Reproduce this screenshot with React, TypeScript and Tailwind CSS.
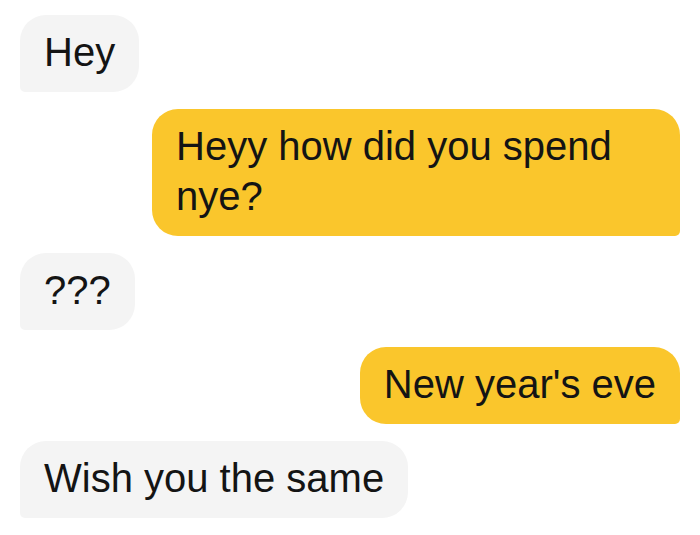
import React from "react";

type Mensaje = {
  id: number;
  texto: string;
  mio: boolean;
};

const mensajes: Mensaje[] = [
  { id: 1, texto: "Hey", mio: false },
  { id: 2, texto: "Heyy how did you spend nye?", mio: true },
  { id: 3, texto: "???", mio: false },
  { id: 4, texto: "New year's eve", mio: true },
  { id: 5, texto: "Wish you the same", mio: false },
];

const App: React.FC = () => {
  return (
    <div
      className="w-[700px] h-[535px] bg-white overflow-hidden"
      style={{ fontFamily: '"Liberation Sans", Arial, sans-serif' }}
    >
      <div className="flex flex-col gap-[17px] px-5 pt-[15px]">
        {mensajes.map((m) => (
          <div
            key={m.id}
            className={
              m.mio
                ? "self-end max-w-[528px] bg-[#fac62c] text-[#141414] rounded-[26px] rounded-br-[5px] px-6 pt-[12px] pb-[15px] text-[40px] leading-[50px]"
                : "self-start max-w-[528px] bg-[#f4f4f4] text-[#141414] rounded-[26px] rounded-bl-[5px] px-6 pt-[12px] pb-[15px] text-[40px] leading-[50px]"
            }
          >
            {m.texto}
          </div>
        ))}
      </div>
    </div>
  );
};

export default App;
